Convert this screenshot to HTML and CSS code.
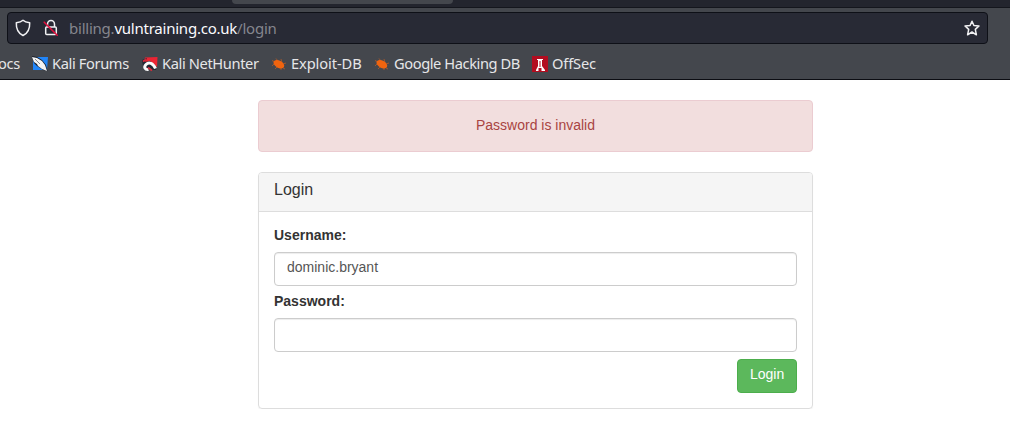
FILE: index.html
```html
<!DOCTYPE html>
<html lang="en">
<head>
<meta charset="utf-8">
<title>Login</title>
<link rel="stylesheet" href="styles.css">
</head>
<body>
<header class="browser">
  <div class="tabstrip"><div class="tab"></div></div>
  <div class="toolbar">
    <div class="urlbar">
      <svg class="shield" width="16" height="18" viewBox="0 0 16 18"><path d="M8 1.2 C6.3 2.8 3.8 3.4 1.3 3.7 C1.1 8.9 2.5 13.9 8 16.5 C13.5 13.9 14.9 8.9 14.7 3.7 C12.2 3.4 9.7 2.8 8 1.2Z"/></svg>
      <svg class="lock" width="16" height="18" viewBox="0 0 16 18"><path d="M4.5 8V5.2a3.5 3.7 0 0 1 7 0V8M3.7 8h8.6q1 0 1 1v5.6q0 1-1 1H3.7q-1 0-1-1V9q0-1 1-1Z"/><path class="slash" d="M1.2 3.2 14.2 16.2"/></svg>
      <div class="url">billing.<span class="domain">vulntraining.co.uk</span>/login</div>
      <svg class="star" width="18" height="18" viewBox="0 0 18 18"><path d="M9 2.2 10.9 6.5 16 6.9 12.3 10.4 13.4 15.8 9 13 4.6 15.8 5.7 10.4 2 6.9 7.1 6.5Z"/></svg>
    </div>
  </div>
  <nav class="bookmarks">
    <span class="bookmark docs">ocs</span>
    <span class="bookmark forums"><svg width="16" height="16" viewBox="0 0 16 16"><path fill="#2185f8" d="M3 1h13l-1 13H1V5Z"/><path fill="#171d29" d="M0 0 5 1 10 4 14 9 15.5 15 11 14 5 10 2 7Z"/><path fill="#f4f4f4" d="M0 1 5 2 10 5 13 9 15 15 10 13 6 10 5 8 2 6Z"/><path stroke="#56616c" stroke-width=".7" d="m3 3 5 5"/></svg>Kali Forums</span>
    <span class="bookmark hunter"><svg width="16" height="16" viewBox="0 0 16 16"><path fill="#eb2433" d="M3 1.5 15.5 1 15 12 10 9 1 11Z"/><path fill="#202632" d="M0 4 5 2 3 6 8 5 15 11 14 14 9 14 3 14 1 10Z"/><path fill="none" stroke="#fafafa" stroke-width="3" d="M6.5 13.5C3 14 1.5 11 4 8.5C7 5.5 11 7 13.5 12.5"/><path fill="none" stroke="#d52c3c" stroke-width="2" d="m6 11.5 4 3M1 5.5l3-2"/></svg>Kali NetHunter</span>
    <span class="bookmark exploit"><svg width="16" height="16" viewBox="0 0 16 16"><path stroke="#b55a27" stroke-width=".8" d="M1 4.5 4 6M5 2.5 7 5M10 3l1 4M3 8l-2 2M7 10l-3 3M10 11l0 3M12 8l3-1M12 12l2 1"/><ellipse cx="8" cy="8.3" rx="5.8" ry="3.6" fill="#f0640f" transform="rotate(28 8 8)"/></svg>Exploit-DB</span>
    <span class="bookmark google"><svg width="16" height="16" viewBox="0 0 16 16"><path stroke="#b55a27" stroke-width=".8" d="M1 4.5 4 6M5 2.5 7 5M10 3l1 4M3 8l-2 2M7 10l-3 3M10 11l0 3M12 8l3-1M12 12l2 1"/><ellipse cx="8" cy="8.3" rx="5.8" ry="3.6" fill="#f0640f" transform="rotate(28 8 8)"/></svg>Google Hacking DB</span>
    <span class="bookmark offsec"><svg width="16" height="16" viewBox="0 0 16 16"><path fill="#b20d20" d="M0 0h16v16H0z"/><path fill="#fff" d="M5 3h6v1h-1v6l3 4v1H9.5v-3h-3v3H4v-1l2-4V4H5Z"/><path fill="#b20d20" d="M7.5 5h1v6h-1z"/></svg>OffSec</span>
  </nav>
</header>
<main class="page">
  <div class="alert">Password is invalid</div>
  <section class="panel">
    <h1 class="panel-title">Login</h1>
    <form class="panel-body">
      <label class="label" for="username">Username:</label>
      <input class="field" id="username" type="text" value="dominic.bryant">
      <label class="label" for="password">Password:</label>
      <input class="field" id="password" type="password">
      <button class="submit" type="button">Login</button>
    </form>
  </section>
</main>
</body>
</html>
```
FILE: styles.css
```css
* { box-sizing: border-box; }
body { margin: 0; background: #fff; overflow: hidden; font-family: "Liberation Sans", Arial, sans-serif; font-size: 14px; line-height: 20px; color: #333; }
svg { display: block; flex: none; }
.browser { height: 80px; background: #44474d; border-bottom: 1px solid #0c0d13; font-family: "Noto Sans", sans-serif; }
.tabstrip { height: 8px; background: #23252e; border-bottom: 1px solid #14161d; }
.tab { width: 221px; height: 4px; margin-left: 232px; background: #44474d; border-radius: 0 0 4px 4px; }
.toolbar { height: 40px; padding: 4px 22px 0 7px; }
.urlbar { display: flex; align-items: center; height: 32px; padding: 0 6px 0 7px; border: 1px solid #0e1017; border-radius: 4px; background: #282a35; }
.urlbar path { fill: none; stroke: #f1f1f3; stroke-width: 1.5; stroke-linejoin: round; stroke-linecap: round; }
.lock { margin-left: 12px; }
.urlbar .slash { stroke: #e3103f; stroke-width: 1.6; }
.url { flex: 1; margin-left: 10px; font-size: 15px; letter-spacing: -.27px; color: #85868e; white-space: pre; }
.url::first-line { letter-spacing: -.23px; }
.domain { color: #fbfbfe; }
.bookmarks { display: flex; align-items: center; height: 31px; padding-bottom: 1px; font-size: 14.67px; color: #e6e6e8; white-space: nowrap; letter-spacing: -.38px; }
.bookmark { display: flex; align-items: center; gap: 4px; }
.bookmark svg { margin-top: 2px; }
.docs { width: 34px; margin-left: -2px; }
.forums { width: 110px; }
.hunter { width: 129px; }
.exploit { width: 103px; letter-spacing: -.1px; }
.google { width: 158px; letter-spacing: -.42px; }
.offsec { letter-spacing: -.15px; }
.page { width: 555px; margin: 20px 0 0 258px; }
.alert { height: 52px; padding: 14px 15px; border: 1px solid #ebccd1; border-radius: 4px; background: #f2dede; color: #a94442; text-align: center; }
.panel { height: 237px; margin-top: 20px; border: 1px solid #ddd; border-radius: 4px; box-shadow: 0 1px 1px rgba(0,0,0,.05); }
.panel-title { height: 39px; margin: 0; padding: 8px 15px; border-bottom: 1px solid #ddd; border-radius: 3px 3px 0 0; background: #f5f5f5; font-size: 16px; font-weight: 400; line-height: 18px; }
.panel-body { display: flex; flex-direction: column; padding: 15px; }
.label { height: 20px; margin-bottom: 5px; font-weight: 700; line-height: 16px; }
.field { width: 100%; height: 34px; margin: 0 0 7px; padding: 4px 12px 8px; border: 1px solid #ccc; border-radius: 4px; box-shadow: inset 0 1px 1px rgba(0,0,0,.075); background: #fff; color: #555; font: 14px/20px "Liberation Sans", Arial, sans-serif; }
.submit { align-self: flex-end; width: 60px; height: 34px; padding: 4px 12px 8px; border: 1px solid #4cae4c; border-radius: 4px; background: #5cb85c; color: #fff; font: 14px/20px "Liberation Sans", Arial, sans-serif; }
```
